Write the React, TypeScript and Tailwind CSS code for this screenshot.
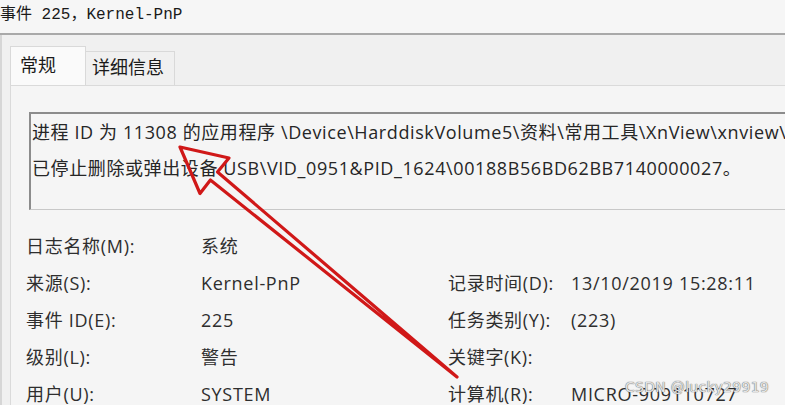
import React from 'react';

const uiFont = { fontFamily: '"Open Sans", "Noto Sans CJK SC", sans-serif' };
const monoFont = { fontFamily: '"Liberation Mono", "Noto Sans CJK SC", monospace' };

const leftRows = [
  ['日志名称(M):', '系统'],
  ['来源(S):', 'Kernel-PnP'],
  ['事件 ID(E):', '225'],
  ['级别(L):', '警告'],
  ['用户(U):', 'SYSTEM'],
];

const rightRows = [
  ['', ''],
  ['记录时间(D):', '13/10/2019 15:28:11'],
  ['任务类别(Y):', '(223)'],
  ['关键字(K):', ''],
  ['计算机(R):', 'MICRO-909110727'],
];

const App: React.FC = () => {
  return (
    <div className="relative w-[785px] h-[405px] overflow-hidden bg-[#f0f0f0] text-[#2e2e2e]" style={uiFont}>
      {/* title bar */}
      <div className="h-[35px] bg-[#f6f6f6] border-b-2 border-[#a9a9a9] pt-[4px] text-[16px] leading-[22px] text-[#1a1a1a]" style={monoFont}>
        事件 225，Kernel-PnP
      </div>

      <div className="border-l-2 border-[#d6d6d6] h-full pl-[8px]">
        {/* tabs */}
        <div className="flex items-end pt-[11px] h-[50px]">
          <div className="w-[76px] h-[39px] bg-[#fafafa] border border-b-0 border-[#d9d9d9] pl-[9px] pt-[5px] text-[18px] text-[#1a1a1a]">
            常规
          </div>
          <div className="w-[89px] h-[34px] bg-[#f0f0f0] border border-l-0 border-b-0 border-[#d9d9d9] pl-[6px] pt-[2px] text-[18px] text-[#1a1a1a]">
            详细信息
          </div>
        </div>

        {/* panel */}
        <div className="bg-[#f5f5f5] border-l border-t border-[#dadada] h-full pl-[18px] pt-[26px]">
          <div className="h-[98px] border-t-2 border-l-2 border-[#8c8c8c] border-b border-b-[#c8c8c8] pl-[1px] text-[18px] tracking-[0.6px] leading-[36px] whitespace-nowrap text-[#262626]">
            <div>进程 ID 为 11308 的应用程序 \Device\HarddiskVolume5\资料\常用工具\XnView\xnview\xnview.exe</div>
            <div>已停止删除或弹出设备 USB\VID_0951&amp;PID_1624\00188B56BD62BB7140000027。</div>
          </div>

          <div className="grid grid-cols-[175px_247px_123px_1fr] mt-[18px] -ml-[3px] text-[18px] tracking-[0.7px] leading-[37px] whitespace-nowrap">
            {leftRows.map((row, i) => (
              <React.Fragment key={i}>
                <div>{row[0]}</div>
                <div>{row[1]}</div>
                <div>{rightRows[i][0]}</div>
                <div>{rightRows[i][1]}</div>
              </React.Fragment>
            ))}
          </div>
        </div>
      </div>

      {/* red annotation arrow */}
      <svg className="absolute left-0 top-0 pointer-events-none" width="785" height="405">
        <polygon
          points="180,147 229,158 217.5,172 457,377 210.4,180 200,193.5"
          fill="none"
          stroke="#d01818"
          strokeWidth="3.2"
          strokeLinejoin="round"
        />
      </svg>

      {/* watermark */}
      <div
        className="absolute left-[625px] top-[377px] text-[14px] text-[#e4e4e4] tracking-[0.3px]"
        style={{ fontFamily: '"DejaVu Sans", sans-serif', textShadow: '0 0 1px #6f6f6f, 0 0 1px #6f6f6f' }}
      >
        CSDN @lucky29919
      </div>
    </div>
  );
};

export default App;
